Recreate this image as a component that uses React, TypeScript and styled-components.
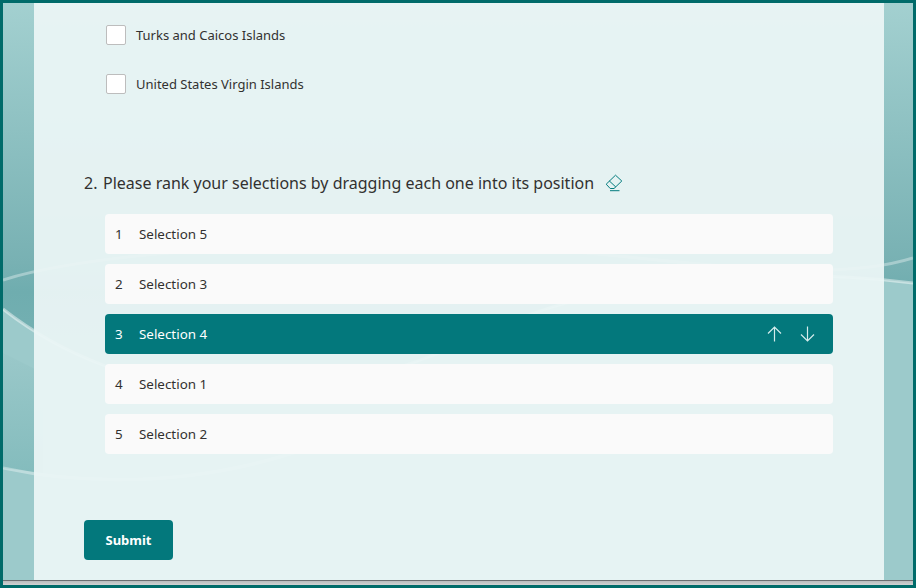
import { createGlobalStyle, styled } from "styled-components";

const GlobalStyle = createGlobalStyle`
	html, body {
		margin: 0;
		padding: 0;
		background: #006b6a;
	}
	body {
		font-family: "Noto Sans", "Open Sans", sans-serif;
		color: #323130;
	}
`;

const Frame = styled.div`
	box-sizing: border-box;
	width: 916px;
	height: 588px;
	border: 3px solid #006b6a;
	display: flex;
	flex-direction: column;
	overflow: hidden;
`;

const Stage = styled.main`
	position: relative;
	flex: 1;
	min-height: 0;
	display: flex;
	padding-left: 31px;
	background: linear-gradient(180deg, #a3d0d0 0%, #78b1b3 45%, #6fadaf 50%, #8dc0c1 100%);
`;

const Backdrop = styled.svg`
	position: absolute;
	inset: 0;
	width: 100%;
	height: 100%;
`;

const Panel = styled.div`
	position: relative;
	box-sizing: border-box;
	width: 850px;
	padding: 22px 51px 0 50px;
	background: rgba(235, 245, 245, 0.94);
	display: flex;
	flex-direction: column;
	align-items: flex-start;
`;

const OptionList = styled.div`
	display: flex;
	flex-direction: column;
	gap: 29px;
	padding-left: 22px;
`;

const Option = styled.label`
	display: flex;
	align-items: center;
	gap: 10px;
	height: 20px;
	font-size: 13px;
`;

const Box = styled.span`
	box-sizing: border-box;
	width: 20px;
	height: 20px;
	background: #ffffff;
	border: 1px solid #bdbdbd;
	border-radius: 2px;
`;

const Question = styled.h2`
	display: flex;
	align-items: center;
	height: 24px;
	margin: 77px 0 0;
	font-size: 16px;
	font-weight: 400;
`;

const QuestionNumber = styled.span`
	width: 19px;
`;

const ClearIcon = styled.svg`
	width: 18px;
	height: 18px;
	margin-left: 11px;
	color: #037c7e;
`;

const RankList = styled.ol`
	list-style: none;
	box-sizing: border-box;
	width: 100%;
	margin: 19px 0 0;
	padding: 0 0 0 21px;
	display: flex;
	flex-direction: column;
	gap: 10px;
`;

const RankRow = styled.li<{ $active?: boolean }>`
	height: 40px;
	padding: 0 18px 0 10px;
	display: flex;
	align-items: center;
	border-radius: 4px;
	font-size: 13.4px;
	background: ${(props) => (props.$active ? "#03787c" : "#fafafa")};
	color: ${(props) => (props.$active ? "#ffffff" : "#323130")};
`;

const RankNumber = styled.span`
	width: 24px;
`;

const RankLabel = styled.span`
	flex: 1;
`;

const MoveIcons = styled.div`
	display: flex;
	gap: 18px;
`;

const MoveIcon = styled.svg`
	display: block;
	width: 15px;
	height: 16px;
	color: #d5ecec;
`;

const Submit = styled.button`
	box-sizing: border-box;
	width: 89px;
	height: 40px;
	margin-top: 66px;
	padding: 0;
	border: none;
	border-radius: 4px;
	background: #03787c;
	color: #ffffff;
	font-family: inherit;
	font-size: 13px;
	font-weight: 700;
`;

const BottomBar = styled.div`
	box-sizing: border-box;
	height: 5px;
	border-top: 1px solid #6b6f72;
	background: linear-gradient(180deg, #b9bcbe, #d0d2d3);
`;

const ranks = [
	{ n: 1, label: "Selection 5" },
	{ n: 2, label: "Selection 3" },
	{ n: 3, label: "Selection 4", active: true },
	{ n: 4, label: "Selection 1" },
	{ n: 5, label: "Selection 2" },
];

export default function App() {
	return (
		<>
			<GlobalStyle />
			<Frame>
				<Stage>
					<Backdrop viewBox="0 0 910 577" preserveAspectRatio="none">
						<defs>
							<linearGradient id="dip" x1="0" y1="0" x2="0" y2="1">
								<stop offset="0" stopColor="#9ac8c9" />
								<stop offset="1" stopColor="#84bcbd" />
							</linearGradient>
						</defs>
						{/* lighter wave below the streaks */}
						<path
							d="M0 306 C120 400 300 420 480 330 C600 275 760 262 910 280 L910 577 L0 577 Z"
							fill="#9ccacb"
						/>
						<path d="M0 350 L40 370 L40 470 L0 465 Z" fill="url(#dip)" />
						<path
							d="M0 277 C60 258 200 240 420 240 C600 240 800 290 910 255"
							fill="none"
							stroke="#ffffff"
							strokeOpacity="0.35"
							strokeWidth="3"
						/>
						<path
							d="M0 306 C120 400 300 420 480 330 C600 275 760 262 910 280"
							fill="none"
							stroke="#ffffff"
							strokeOpacity="0.45"
							strokeWidth="3"
						/>
						<path
							d="M0 465 C60 478 170 488 290 450 C340 432 400 445 500 445"
							fill="none"
							stroke="#ffffff"
							strokeOpacity="0.35"
							strokeWidth="3"
						/>
					</Backdrop>
					<Panel>
						<OptionList>
							<Option>
								<Box />
								Turks and Caicos Islands
							</Option>
							<Option>
								<Box />
								United States Virgin Islands
							</Option>
						</OptionList>

						<Question>
							<QuestionNumber>2.</QuestionNumber>
							Please rank your selections by dragging each one into its position
							<ClearIcon viewBox="0 0 18 18" fill="none" stroke="currentColor" strokeWidth="1">
								<path d="M1.2 10.2 L10.5 1.2 L16.8 7 L9 14.5 L5.2 14.5 Z" />
								<path d="M4.2 6.8 L10.8 13" />
								<path d="M5 16.7 H14.5" />
							</ClearIcon>
						</Question>

						<RankList>
							{ranks.map((rank) => (
								<RankRow key={rank.n} $active={rank.active}>
									<RankNumber>{rank.n}</RankNumber>
									<RankLabel>{rank.label}</RankLabel>
									{rank.active && (
										<MoveIcons>
											<MoveIcon viewBox="0 0 15 16" fill="none" stroke="currentColor" strokeWidth="1.2">
												<path d="M7.5 15.5 V1 M1 7.5 L7.5 1 L14 7.5" />
											</MoveIcon>
											<MoveIcon viewBox="0 0 15 16" fill="none" stroke="currentColor" strokeWidth="1.2">
												<path d="M7.5 .5 V15 M1 8.5 L7.5 15 L14 8.5" />
											</MoveIcon>
										</MoveIcons>
									)}
								</RankRow>
							))}
						</RankList>

						<Submit type="button">Submit</Submit>
					</Panel>
				</Stage>
				<BottomBar />
			</Frame>
		</>
	);
}
